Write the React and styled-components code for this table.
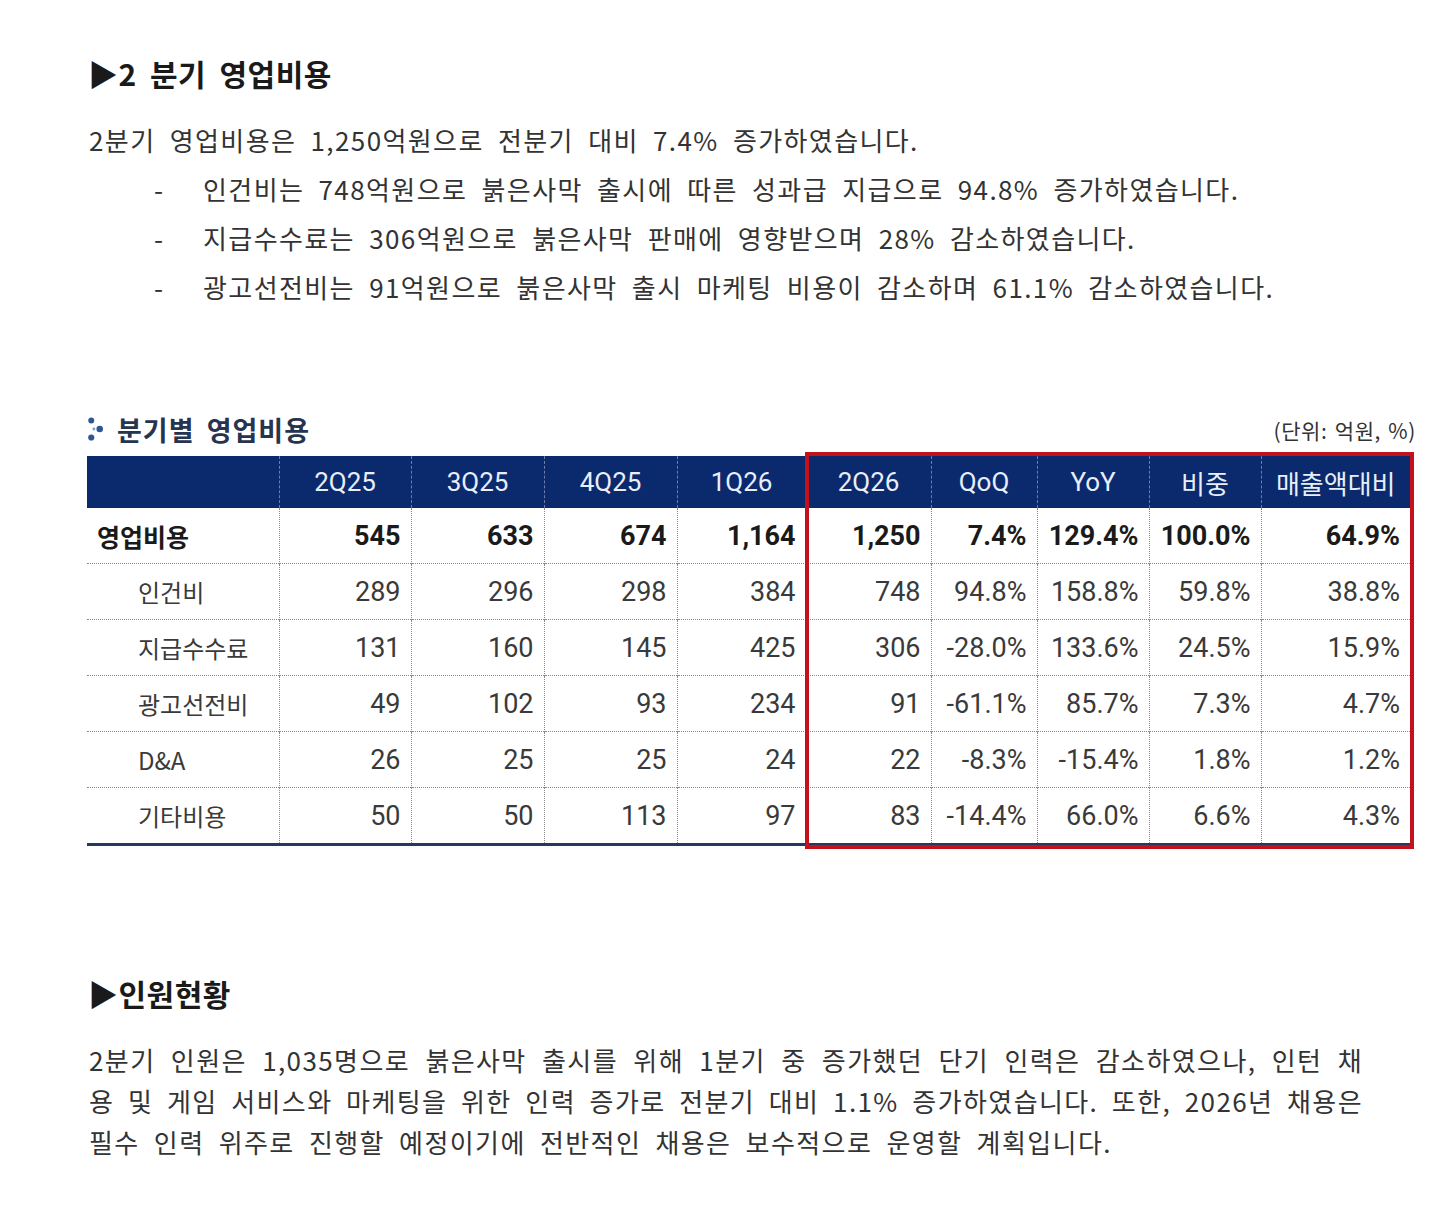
import styled, { createGlobalStyle } from "styled-components";

const GlobalStyle = createGlobalStyle`
  html, body {
    margin: 0;
    padding: 0;
    background: #ffffff;
  }
  body {
    font-family: "Noto Sans CJK KR", "Noto Sans", sans-serif;
    color: #333333;
  }
`;

const KR = `"Noto Sans CJK KR", "Noto Sans", sans-serif`;
const NUM = `Roboto, "Noto Sans CJK KR", sans-serif`;

const columns = [192, 132, 133, 133, 129, 125, 106, 112, 112, 149];
const headers = ["", "2Q25", "3Q25", "4Q25", "1Q26", "2Q26", "QoQ", "YoY", "비중", "매출액대비"];

const rows = [
  { label: "영업비용", total: true, values: ["545", "633", "674", "1,164", "1,250", "7.4%", "129.4%", "100.0%", "64.9%"] },
  { label: "인건비", values: ["289", "296", "298", "384", "748", "94.8%", "158.8%", "59.8%", "38.8%"] },
  { label: "지급수수료", values: ["131", "160", "145", "425", "306", "-28.0%", "133.6%", "24.5%", "15.9%"] },
  { label: "광고선전비", values: ["49", "102", "93", "234", "91", "-61.1%", "85.7%", "7.3%", "4.7%"] },
  { label: "D&A", values: ["26", "25", "25", "24", "22", "-8.3%", "-15.4%", "1.8%", "1.2%"] },
  { label: "기타비용", values: ["50", "50", "113", "97", "83", "-14.4%", "66.0%", "6.6%", "4.3%"] },
];

const bullets = [
  "인건비는 748억원으로 붉은사막 출시에 따른 성과급 지급으로 94.8% 증가하였습니다.",
  "지급수수료는 306억원으로 붉은사막 판매에 영향받으며 28% 감소하였습니다.",
  "광고선전비는 91억원으로 붉은사막 출시 마케팅 비용이 감소하며 61.1% 감소하였습니다.",
];

const Page = styled.div`
  padding: 53px 0 60px 88px;
  width: 1340px;
`;

const SectionTitle = styled.h2`
  margin: 0;
  font-family: ${KR};
  font-size: 30px;
  font-weight: 700;
  line-height: 40px;
  color: #1a1a1a;
  letter-spacing: 0.5px;
  word-spacing: 6px;
  margin-top: ${(p) => p.$top || 0}px;
`;

const Paragraph = styled.p`
  margin: 22px 0 0 1px;
  font-size: 26px;
  line-height: 49px;
  letter-spacing: 1.4px;
  word-spacing: 7px;
  color: #333;
`;

const Bullets = styled.ul`
  list-style: none;
  margin: 0;
  padding: 0 0 0 66px;
`;

const Bullet = styled.li`
  display: flex;
  font-size: 26px;
  line-height: 49px;
  letter-spacing: 1.4px;
  word-spacing: 7px;
  color: #333;
`;

const Dash = styled.span`
  width: 49px;
  flex: none;
`;

const CaptionRow = styled.div`
  margin-top: 98px;
  width: 1329px;
  display: flex;
  align-items: center;
  justify-content: space-between;
  height: 40px;
  margin-bottom: 7px;
  margin-left: -1px;
`;

const Caption = styled.div`
  display: flex;
  align-items: center;
  gap: 13px;
  font-size: 27px;
  font-weight: 700;
  color: #26344f;
  letter-spacing: 1px;
  word-spacing: 5px;
`;

const Unit = styled.div`
  font-size: 21px;
  color: #333;
  letter-spacing: 0.6px;
  word-spacing: 2px;
  padding-top: 2px;
`;

const TableWrap = styled.div`
  position: relative;
  width: 1323px;
  margin-left: -1px;
  margin-top: 4px;
`;

const Table = styled.table`
  width: 1323px;
  table-layout: fixed;
  border-collapse: collapse;
  border-bottom: 3px solid #25395e;
`;

const Col = styled.col`
  width: ${(p) => p.$w}px;
`;

const HeadCell = styled.th`
  height: 52px;
  padding: 0;
  background: #0b2a6e;
  color: #e9eef8;
  font-family: ${NUM};
  font-size: 26px;
  font-weight: 400;
  text-align: center;
  border-left: 1px dashed rgba(255, 255, 255, 0.4);
  &:first-child {
    border-left: none;
  }
`;

const BodyRow = styled.tr`
  & + & td {
    border-top: 1px dotted #8a8a8a;
  }
`;

const Label = styled.td`
  height: 55px;
  padding: 0 0 0 ${(p) => (p.$total ? 10 : 51)}px;
  font-family: ${KR};
  font-size: ${(p) => (p.$total ? 25 : 24)}px;
  font-weight: ${(p) => (p.$total ? 700 : 400)};
  color: ${(p) => (p.$total ? "#1a1a1a" : "#3a3a3a")};
  white-space: nowrap;
`;

const Value = styled.td`
  height: 55px;
  padding: 0 10px 0 0;
  text-align: right;
  font-family: ${NUM};
  font-size: 27px;
  font-weight: ${(p) => (p.$total ? 700 : 400)};
  color: ${(p) => (p.$total ? "#1a1a1a" : "#3a3a3a")};
  border-left: 1px dotted #8a8a8a;
  white-space: nowrap;
`;

const Highlight = styled.div`
  position: absolute;
  left: 718px;
  right: -4px;
  top: -4px;
  bottom: -3px;
  border: 4px solid #c4121c;
  pointer-events: none;
`;

const Justified = styled.p`
  margin: 26px 0 0 1px;
  width: 1274px;
  font-size: 26px;
  line-height: 41px;
  letter-spacing: 1.4px;
  color: #333;
`;

const Line = styled.span`
  display: block;
  text-align: ${(p) => (p.$last ? "left" : "justify")};
  text-align-last: ${(p) => (p.$last ? "left" : "justify")};
  word-spacing: ${(p) => (p.$last ? 7 : 0)}px;
`;

const DotsIcon = () => (
  <svg width="17" height="26" viewBox="0 0 16 24">
    <circle cx="4" cy="4" r="2.8" fill="#2f5597" />
    <circle cx="12" cy="12" r="3.1" fill="#2f5597" />
    <circle cx="4" cy="20" r="2.9" fill="#2f5597" />
    <circle cx="6.5" cy="12" r="1.4" fill="#7f9ccf" />
  </svg>
);

const App = () => (
  <>
    <GlobalStyle />
    <Page>
      <SectionTitle>▶2 분기 영업비용</SectionTitle>
      <Paragraph>
        2분기 영업비용은 1,250억원으로 전분기 대비 7.4% 증가하였습니다.
      </Paragraph>
      <Bullets>
        {bullets.map((text) => (
          <Bullet key={text}>
            <Dash>-</Dash>
            {text}
          </Bullet>
        ))}
      </Bullets>

      <CaptionRow>
        <Caption>
          <DotsIcon />
          분기별 영업비용
        </Caption>
        <Unit>(단위: 억원, %)</Unit>
      </CaptionRow>

      <TableWrap>
        <Table>
          <colgroup>
            {columns.map((w, i) => (
              <Col key={i} $w={w} />
            ))}
          </colgroup>
          <thead>
            <tr>
              {headers.map((h, i) => (
                <HeadCell key={i}>{h}</HeadCell>
              ))}
            </tr>
          </thead>
          <tbody>
            {rows.map((row) => (
              <BodyRow key={row.label}>
                <Label $total={row.total}>{row.label}</Label>
                {row.values.map((v, i) => (
                  <Value key={i} $total={row.total}>
                    {v}
                  </Value>
                ))}
              </BodyRow>
            ))}
          </tbody>
        </Table>
        <Highlight />
      </TableWrap>

      <SectionTitle $top={127}>▶인원현황</SectionTitle>
      <Justified>
        <Line>
          2분기 인원은 1,035명으로 붉은사막 출시를 위해 1분기 중 증가했던 단기 인력은 감소하였으나, 인턴 채
        </Line>
        <Line>
          용 및 게임 서비스와 마케팅을 위한 인력 증가로 전분기 대비 1.1% 증가하였습니다. 또한, 2026년 채용은
        </Line>
        <Line $last>
          필수 인력 위주로 진행할 예정이기에 전반적인 채용은 보수적으로 운영할 계획입니다.
        </Line>
      </Justified>
    </Page>
  </>
);

export default App;
